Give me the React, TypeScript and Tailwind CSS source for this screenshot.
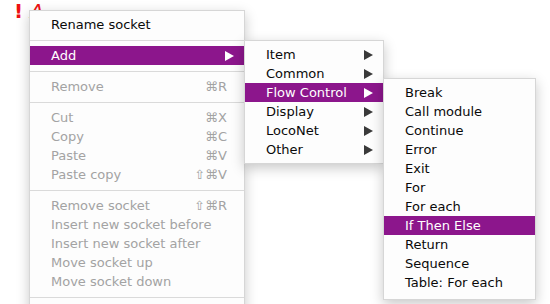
import React from "react";

type Item =
  | { sep: true }
  | { sep?: false; label: string; disabled?: boolean; shortcut?: string; arrow?: boolean; active?: boolean };

const Arrow = ({ white }: { white?: boolean }) => (
  <svg width="9" height="10" viewBox="0 0 9 10" className="shrink-0">
    <polygon points="0,0 9,5 0,10" fill={white ? "#ffffff" : "#3a3a3a"} />
  </svg>
);

function Menu({ items, className, padB = "pb-[4px]" }: { items: Item[]; className: string; padB?: string }) {
  return (
    <div
      className={`absolute bg-[#fdfdfd] border border-[#d6d6d6] shadow-[0_4px_12px_rgba(0,0,0,0.22)] pt-[4px] ${padB} ${className}`}
    >
      {items.map((it, i) =>
        it.sep ? (
          <div key={i} className="h-[12px] flex items-center">
            <div className="h-px w-full bg-[#dadada]" />
          </div>
        ) : (
          <div
            key={i}
            className={`h-[19px] flex items-center pl-[21px] pr-[10px] ${
              it.active ? "bg-[#8c168c] text-white" : it.disabled ? "text-[#a3a3a3]" : "text-[#0a0a0a]"
            }`}
          >
            <span className="flex-1 whitespace-nowrap">{it.label}</span>
            {it.shortcut && <span className="pr-[7px] whitespace-nowrap">{it.shortcut}</span>}
            {it.arrow && <Arrow white={it.active} />}
          </div>
        )
      )}
    </div>
  );
}

export default function App() {
  const main: Item[] = [
    { label: "Rename socket" },
    { sep: true },
    { label: "Add", arrow: true, active: true },
    { sep: true },
    { label: "Remove", disabled: true, shortcut: "⌘R" },
    { sep: true },
    { label: "Cut", disabled: true, shortcut: "⌘X" },
    { label: "Copy", disabled: true, shortcut: "⌘C" },
    { label: "Paste", disabled: true, shortcut: "⌘V" },
    { label: "Paste copy", disabled: true, shortcut: "⇧⌘V" },
    { sep: true },
    { label: "Remove socket", disabled: true, shortcut: "⇧⌘R" },
    { label: "Insert new socket before", disabled: true },
    { label: "Insert new socket after", disabled: true },
    { label: "Move socket up", disabled: true },
    { label: "Move socket down", disabled: true },
    { sep: true },
    { label: "", disabled: true },
  ];
  const sub: Item[] = [
    { label: "Item", arrow: true },
    { label: "Common", arrow: true },
    { label: "Flow Control", arrow: true, active: true },
    { label: "Display", arrow: true },
    { label: "LocoNet", arrow: true },
    { label: "Other", arrow: true },
  ];
  const sub2: Item[] = [
    { label: "Break" },
    { label: "Call module" },
    { label: "Continue" },
    { label: "Error" },
    { label: "Exit" },
    { label: "For" },
    { label: "For each" },
    { label: "If Then Else", active: true },
    { label: "Return" },
    { label: "Sequence" },
    { label: "Table: For each" },
  ];
  return (
    <div
      className="relative w-[550px] h-[304px] bg-white overflow-hidden text-[13px] leading-none"
      style={{ fontFamily: '"DejaVu Sans", "Liberation Sans", sans-serif' }}
    >
      <div className="absolute left-[14px] top-[1px] text-[20px] text-[#ee1111] font-bold whitespace-nowrap">
        ! <span className="italic font-normal">A</span>
      </div>
      <Menu items={main} className="left-[29px] top-[10px] w-[216px]" />
      <Menu items={sub} className="left-[244px] top-[40px] w-[140px]" padB="pb-[4px]" />
      <Menu items={sub2} className="left-[383px] top-[78px] w-[153px]" padB="pb-[7px]" />
    </div>
  );
}
